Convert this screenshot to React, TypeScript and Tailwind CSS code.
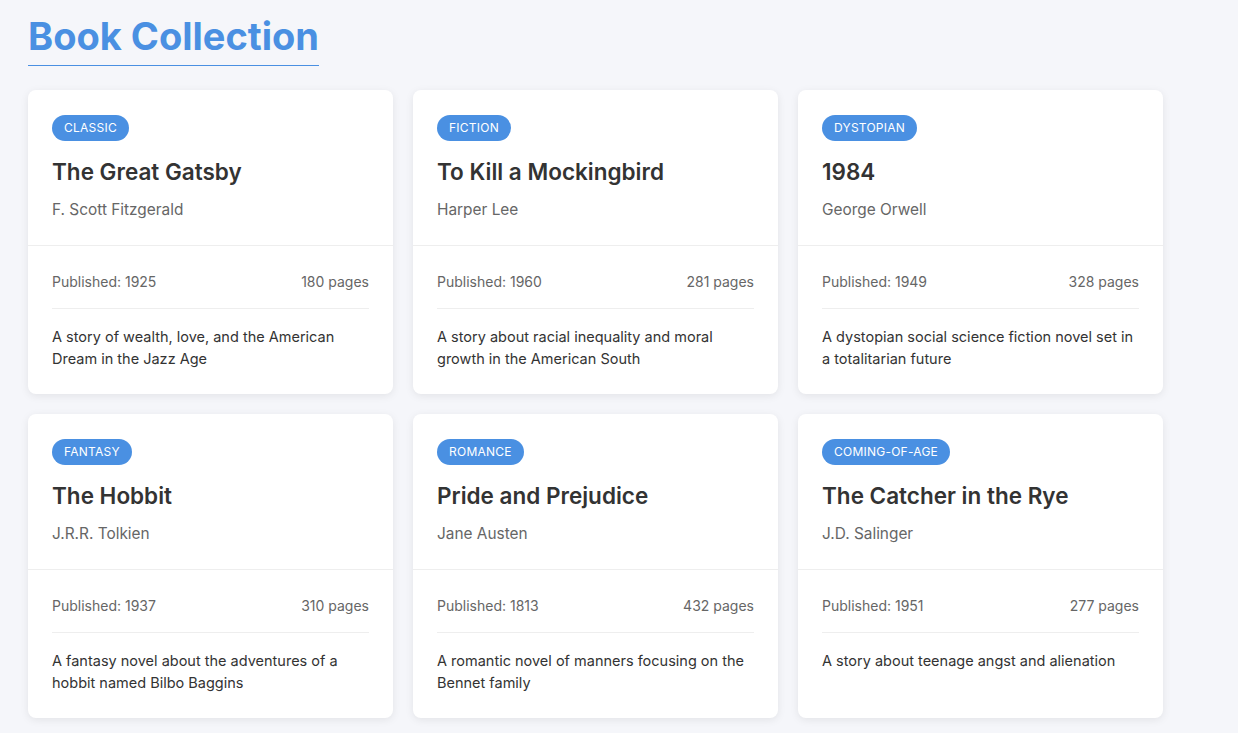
import React from "react";

type Book = {
  genre: string;
  title: string;
  author: string;
  year: number;
  pages: number;
  description: string;
};

const books: Book[] = [
  {
    genre: "Classic",
    title: "The Great Gatsby",
    author: "F. Scott Fitzgerald",
    year: 1925,
    pages: 180,
    description: "A story of wealth, love, and the American Dream in the Jazz Age",
  },
  {
    genre: "Fiction",
    title: "To Kill a Mockingbird",
    author: "Harper Lee",
    year: 1960,
    pages: 281,
    description: "A story about racial inequality and moral growth in the American South",
  },
  {
    genre: "Dystopian",
    title: "1984",
    author: "George Orwell",
    year: 1949,
    pages: 328,
    description: "A dystopian social science fiction novel set in a totalitarian future",
  },
  {
    genre: "Fantasy",
    title: "The Hobbit",
    author: "J.R.R. Tolkien",
    year: 1937,
    pages: 310,
    description: "A fantasy novel about the adventures of a hobbit named Bilbo Baggins",
  },
  {
    genre: "Romance",
    title: "Pride and Prejudice",
    author: "Jane Austen",
    year: 1813,
    pages: 432,
    description: "A romantic novel of manners focusing on the Bennet family",
  },
  {
    genre: "Coming-of-age",
    title: "The Catcher in the Rye",
    author: "J.D. Salinger",
    year: 1951,
    pages: 277,
    description: "A story about teenage angst and alienation",
  },
];

const BookCard = ({ book }: { book: Book }) => (
  <div className="flex flex-col overflow-hidden rounded-lg bg-white shadow-[0_2px_8px_rgba(0,0,0,0.08)]">
    <div className="border-b border-[#eeeeee] px-6 pt-[25px] pb-[23px]">
      <span className="flex h-[26px] w-fit items-center rounded-full bg-[#4a90e2] px-3 text-xs leading-4 tracking-[0.02em] text-white uppercase">
        {book.genre}
      </span>
      <h2 className="mt-[16px] text-[22.5px] leading-[30px] font-semibold text-[#333333]">{book.title}</h2>
      <p className="mt-[11px] text-[15.4px] leading-6 text-[#666666]">{book.author}</p>
    </div>
    <div className="flex-1 px-6 pt-6 pb-[23px]">
      <div className="flex items-center justify-between border-b border-[#eeeeee] pb-[14px] text-sm leading-6 text-[#666666]">
        <span>Published: {book.year}</span>
        <span>{book.pages} pages</span>
      </div>
      <p className="mt-[17px] text-[14.5px] leading-[22.4px] text-[#333333]">{book.description}</p>
    </div>
  </div>
);

export default function App() {
  return (
    <div className="min-h-screen bg-[#f5f6fa] px-7 pt-[13px] pb-6 font-['Inter','Liberation_Sans',sans-serif]">
      <h1 className="inline-block border-b border-[#4a90e2] pb-[6px] text-[38px] leading-[46px] font-bold text-[#4a90e2]">
        Book Collection
      </h1>
      <div className="mt-6 grid grid-cols-[repeat(3,365px)] gap-5">
        {books.map((book) => (
          <BookCard key={book.title} book={book} />
        ))}
      </div>
    </div>
  );
}
